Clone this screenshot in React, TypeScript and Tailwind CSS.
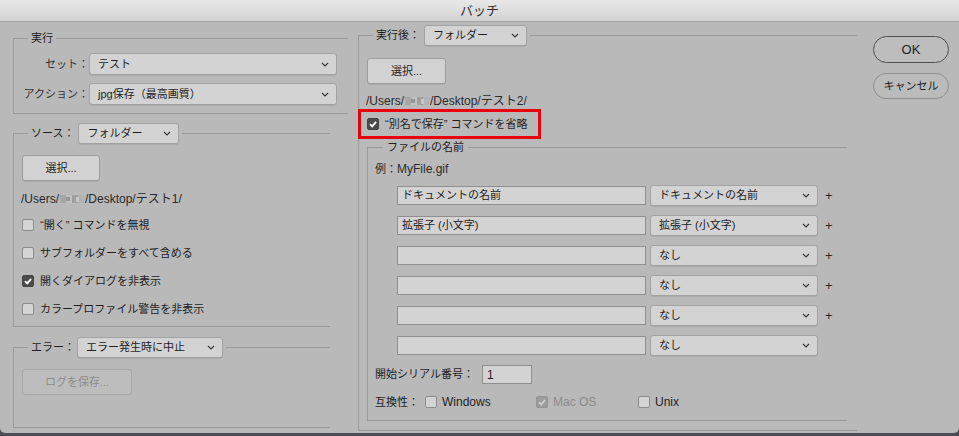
import type { ReactNode } from "react";

function Chevron() {
  return (
    <svg width="8" height="5" viewBox="0 0 8 5" className="shrink-0">
      <path d="M1 1l3 3 3-3" stroke="#3a3a3a" strokeWidth="1.2" fill="none" />
    </svg>
  );
}

function Select({ value, className = "" }: { value: string; className?: string }) {
  return (
    <div
      className={`flex items-center justify-between h-[21px] pl-[8px] pr-[7px] bg-[#d3d3d3] border border-[#a2a2a2] rounded-[3px] shadow-[0_1px_0_rgba(0,0,0,0.08)] text-[11px] text-[#1e1e1e] ${className}`}
    >
      <span className="whitespace-nowrap">{value}</span>
      <Chevron />
    </div>
  );
}

function Check({ checked = false, disabled = false }: { checked?: boolean; disabled?: boolean }) {
  const box = checked
    ? disabled
      ? "bg-[#9c9c9c] border-[#949494]"
      : "bg-[#4b4b4b] border-[#444444]"
    : "bg-[#d4d4d4] border-[#8c8c8c]";
  return (
    <span className={`flex items-center justify-center w-[12px] h-[12px] rounded-[2px] border shrink-0 ${box}`}>
      {checked && (
        <svg width="10" height="10" viewBox="0 0 10 10">
          <path
            d="M2 5.2l2.2 2.2 3.9-4.6"
            stroke={disabled ? "#cfcfcf" : "#ffffff"}
            strokeWidth="1.8"
            fill="none"
          />
        </svg>
      )}
    </span>
  );
}

function CheckRow({ label, checked }: { label: string; checked?: boolean }) {
  return (
    <div className="flex items-center gap-[6px] h-[16px] text-[11px] text-[#1e1e1e]">
      <Check checked={checked} />
      <span>{label}</span>
    </div>
  );
}

function Blur() {
  return (
    <svg width="24" height="12" viewBox="0 0 24 12" className="mx-px">
      <rect x="0" y="2" width="6" height="8" fill="#a7a7a7" />
      <rect x="6" y="2" width="6" height="8" fill="#c2c2c2" />
      <rect x="12" y="2" width="6" height="8" fill="#9f9f9f" />
      <rect x="18" y="2" width="6" height="8" fill="#b2b2b2" />
      <rect x="6" y="4" width="4" height="4" fill="#979797" />
      <rect x="16" y="4" width="3" height="5" fill="#c8c8c8" />
    </svg>
  );
}

function Path({ name }: { name: string }) {
  return (
    <div className="flex items-center h-[16px] text-[12px] text-[#2a2a2a]">
      <span>/Users/</span>
      <Blur />
      <span>/Desktop/{name}/</span>
    </div>
  );
}

function Button({ label, disabled, className = "" }: { label: string; disabled?: boolean; className?: string }) {
  return (
    <div
      className={`flex items-center justify-center h-[26px] rounded-[3px] border text-[11px] ${
        disabled
          ? "bg-[#bdbdbd] border-[#a8a8a8] text-[#8c8c8c]"
          : "bg-[#d2d2d2] border-[#9d9d9d] text-[#1e1e1e] shadow-[0_1px_0_rgba(0,0,0,0.08)]"
      } ${className}`}
    >
      {label}
    </div>
  );
}

// fieldset without padding so the legend always sits at the same offset; padding goes on the body
function Group({
  legend,
  className = "",
  legendClass = "ml-[14px] px-[3px]",
  bodyClass = "",
  children,
}: {
  legend: ReactNode;
  className?: string;
  legendClass?: string;
  bodyClass?: string;
  children: ReactNode;
}) {
  return (
    <fieldset className={`border-t border-l border-b border-[#9a9a9a] ${className}`}>
      <legend className={legendClass}>{legend}</legend>
      <div className={bodyClass}>{children}</div>
    </fieldset>
  );
}

function NameRow({ text, choice, plus = true }: { text: string; choice: string; plus?: boolean }) {
  return (
    <div className="flex items-center ml-[22px] h-[21px]">
      <div className="flex items-center w-[249px] h-[19px] pl-[4px] bg-[#d3d3d3] border border-[#8f8f8f] text-[11px] text-[#1e1e1e]">
        {text}
      </div>
      <Select value={choice} className="w-[168px] ml-[4px]" />
      {plus && <span className="ml-[7px] text-[13px] text-[#2a2a2a]">+</span>}
    </div>
  );
}

export default function App() {
  return (
    <div className="w-[959px] h-[436px] bg-[#4a4d55] font-['Liberation_Sans','Noto_Sans_CJK_JP',sans-serif]">
      <div className="h-[433px] bg-[#b9b9b9] rounded-b-[5px] overflow-hidden">
        {/* title bar */}
        <div className="flex items-center justify-center h-[22px] border-b border-[#a3a3a3] bg-gradient-to-b from-[#e8e8e8] to-[#d3d3d3] text-[13px] text-[#2e2e2e]">
          バッチ
        </div>

        <div className="flex items-start pl-[13px]">
          {/* left column */}
          <div className="flex flex-col w-[335px]">
            <Group
              className="mt-[8px]"
              bodyClass="pt-[7px] pb-[8px] pr-[11px]"
              legend={<span className="block text-[11px] leading-[16px] text-[#1e1e1e]">実行</span>}
            >
              <div className="flex items-center h-[22px]">
                <span className="w-[75px] text-right text-[11px] text-[#333]">セット：</span>
                <Select value="テスト" className="flex-1 h-[22px]" />
              </div>
              <div className="flex items-center h-[22px] mt-[8px]">
                <span className="w-[75px] text-right text-[11px] text-[#333]">アクション：</span>
                <Select value="jpg保存（最高画質）" className="flex-1 h-[22px]" />
              </div>
            </Group>

            <Group
              className="w-[317px] mt-[9px]"
              bodyClass="pt-[11px] pb-[9px] pl-[8px]"
              legend={
                <span className="flex items-center text-[11px] text-[#1e1e1e]">
                  ソース：
                  <Select value="フォルダー" className="w-[101px] ml-[4px]" />
                </span>
              }
            >
              <Button label="選択..." className="w-[78px]" />
              <div className="mt-[10px] -ml-px">
                <Path name="テスト1" />
              </div>
              <div className="flex flex-col gap-[12px] mt-[10px]">
                <CheckRow label="“開く” コマンドを無視" />
                <CheckRow label="サブフォルダーをすべて含める" />
                <CheckRow label="開くダイアログを非表示" checked />
                <CheckRow label="カラープロファイル警告を非表示" />
              </div>
            </Group>

            <Group
              className="w-[317px] mt-[10px]"
              bodyClass="pt-[11px] pb-[32px] pl-[8px]"
              legend={
                <span className="flex items-center text-[11px] text-[#1e1e1e]">
                  エラー：
                  <Select value="エラー発生時に中止" className="w-[146px] ml-[2px]" />
                </span>
              }
            >
              <Button label="ログを保存..." disabled className="w-[110px]" />
            </Group>
          </div>

          {/* right column */}
          <Group
            className="w-[499px] ml-[10px] mt-[3px]"
            bodyClass="pt-[12px] pb-[9px] pl-[8px] pr-[10px]"
            legend={
              <span className="flex items-center text-[11px] text-[#1e1e1e]">
                実行後：
                <Select value="フォルダー" className="w-[103px] ml-[4px]" />
              </span>
            }
          >
            <Button label="選択..." className="w-[79px]" />
            <div className="mt-[9px] -ml-px">
              <Path name="テスト2" />
            </div>
            <div className="flex items-center gap-[6px] w-[183px] h-[30px] -ml-[9px] pl-[6px] border-[3px] border-[#e8030a] text-[11px] text-[#1e1e1e]">
              <Check checked />
              <span>“別名で保存” コマンドを省略</span>
            </div>

            <Group
              bodyClass="pt-[6px] pb-[10px] pl-[7px]"
              legendClass="ml-[15px] px-[4px]"
              legend={<span className="block text-[11px] leading-[16px] text-[#1e1e1e]">ファイルの名前</span>}
            >
              <div className="flex items-center h-[16px] text-[12px] text-[#2a2a2a]">
                <span className="text-[11px]">例：</span>MyFile.gif
              </div>
              <div className="flex flex-col gap-[9px] mt-[8px]">
                <NameRow text="ドキュメントの名前" choice="ドキュメントの名前" />
                <NameRow text="拡張子 (小文字)" choice="拡張子 (小文字)" />
                <NameRow text="" choice="なし" />
                <NameRow text="" choice="なし" />
                <NameRow text="" choice="なし" />
                <NameRow text="" choice="なし" plus={false} />
              </div>
              <div className="flex items-center h-[19px] mt-[9px] text-[11px] text-[#1e1e1e]">
                <span>開始シリアル番号：</span>
                <div className="flex items-center w-[50px] h-[19px] ml-[8px] pl-[4px] bg-[#d3d3d3] border border-[#8f8f8f] text-[12px]">
                  1
                </div>
              </div>
              <div className="flex items-center h-[16px] mt-[10px] text-[12px] text-[#1e1e1e]">
                <span className="text-[11px]">互換性：</span>
                <span className="ml-[6px]"><Check /></span>
                <span className="ml-[5px] w-[94px]">Windows</span>
                <Check checked disabled />
                <span className="ml-[5px] w-[85px] text-[#8a8a8a]">Mac OS</span>
                <Check />
                <span className="ml-[5px]">Unix</span>
              </div>
            </Group>
          </Group>

          {/* buttons */}
          <div className="flex flex-col gap-[10px] ml-[16px] mt-[14px]">
            <div className="flex items-center justify-center w-[76px] h-[27px] rounded-full border border-[#4f4f4f] bg-[#bdbdbd] text-[13px] text-[#1e1e1e]">
              OK
            </div>
            <div className="flex items-center justify-center w-[76px] h-[26px] rounded-full border border-[#8e8e8e] bg-[#bbbbbb] text-[11px] text-[#1e1e1e]">
              キャンセル
            </div>
          </div>
        </div>
      </div>
    </div>
  );
}
